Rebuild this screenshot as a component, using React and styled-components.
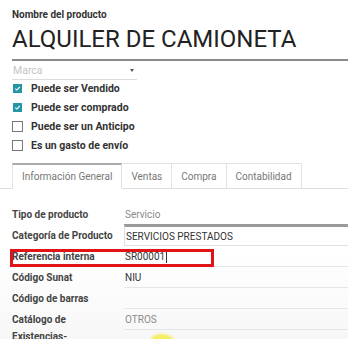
import React from 'react'
import styled, { createGlobalStyle } from 'styled-components';

const GlobalStyle = createGlobalStyle`
    *, *::before, *::after {
        box-sizing: border-box;
    }
    html, body {
        margin: 0;
        padding: 0;
        background: #fff;
        font-family: Roboto, "Liberation Sans", sans-serif;
        overflow: hidden;
    }
`;

const checks = [
    { label: 'Puede ser Vendido', checked: true },
    { label: 'Puede ser comprado', checked: true },
    { label: 'Puede ser un Anticipo', checked: false },
    { label: 'Es un gasto de envío', checked: false },
];

const tabs = ['Información General', 'Ventas', 'Compra', 'Contabilidad'];

const App = () => {
    return (
        <Page>
            <GlobalStyle />
            <FieldCaption>Nombre del producto</FieldCaption>
            <Title>ALQUILER DE CAMIONETA</Title>
            <Brand>
                <span>Marca</span>
                <Caret />
            </Brand>

            <Checks>
                {checks.map((c) => (
                    <CheckRow key={c.label}>
                        <Box $checked={c.checked}>
                            {c.checked && (
                                <svg width="7" height="7" viewBox="0 0 8 8">
                                    <path d="M1.5 4.2 L3.3 5.8 L6.6 2.2" stroke="#fff" strokeWidth="1.3" fill="none" />
                                </svg>
                            )}
                        </Box>
                        <CheckLabel>{c.label}</CheckLabel>
                    </CheckRow>
                ))}
            </Checks>

            <TabBar>
                {tabs.map((t, i) => (
                    <Tab key={t} $active={i === 0}>{t}</Tab>
                ))}
            </TabBar>

            <Fields>
                <Label>Tipo de producto</Label>
                <Value $line="#9a9a9a" $muted>Servicio</Value>

                <Label>Categoría de Producto</Label>
                <BoxedValue>SERVICIOS PRESTADOS</BoxedValue>

                <Highlight>
                    <Label>Referencia interna</Label>
                    <Value $line="#e6e6e6">SR00001<Cursor /></Value>
                </Highlight>

                <Label>Código Sunat</Label>
                <Value $line="#e6e6e6">NIU</Value>

                <Label>Código de barras</Label>
                <Value $line="#e6e6e6"></Value>

                <Label>Catálogo de<br />Existencias-</Label>
                <Value $line="#e6e6e6" $muted>OTROS</Value>
            </Fields>
            <Spot />
        </Page>
    );
}

const Page = styled.div`
    position: relative;
    width: 348px;
    height: 339px;
    overflow: hidden;
    padding: 8px 0 0 12px;
    background: linear-gradient(#fff 0, #fff 250px, #f7f7f7 339px);
`;

const FieldCaption = styled.div`
    font-size: 10px;
    font-weight: 700;
    color: #333;
    line-height: 13px;
`;

const Title = styled.div`
    margin-top: 4px;
    font-size: 24px;
    line-height: 28px;
    color: #222;
    padding-bottom: 6px;
    border-bottom: 2px solid #8a8a8a;
`;

const Brand = styled.div`
    width: 125px;
    height: 18px;
    margin-top: 1px;
    display: flex;
    align-items: center;
    justify-content: space-between;
    border-bottom: 1px solid #dcdcdc;
    font-size: 10.5px;
    color: #c4c4c4;
    padding-left: 1px;
`;

const Caret = styled.span`
    width: 0;
    height: 0;
    margin-right: 3px;
    border-left: 2.5px solid transparent;
    border-right: 2.5px solid transparent;
    border-top: 3px solid #555;
`;

const Checks = styled.div`
    display: flex;
    flex-direction: column;
    gap: 5px;
    margin-top: 1px;
`;

const CheckRow = styled.div`
    display: flex;
    align-items: center;
    height: 14px;
`;

const Box = styled.span`
    width: 11px;
    height: 11px;
    display: flex;
    align-items: center;
    justify-content: center;
    margin-right: 8px;
    background: ${p => (p.$checked ? '#2596a6' : '#fff')};
    border: ${p => (p.$checked ? '1px solid #fff' : '1px solid #777')};
`;

const CheckLabel = styled.span`
    font-size: 10.5px;
    font-weight: 700;
    color: #333;
`;

const TabBar = styled.div`
    display: flex;
    margin: 11px 0 0 -12px;
    padding-left: 12px;
    height: 26px;
    border-bottom: 1px solid #dedede;
`;

const Tab = styled.div`
    display: flex;
    align-items: center;
    padding: 0 9px;
    font-size: 10px;
    color: #777;
    border: 1px solid #e2e2e2;
    border-left: ${p => (p.$active ? '1px solid #e2e2e2' : 'none')};
    border-top: ${p => (p.$active ? '2px solid #aaa' : '1px solid #e2e2e2')};
    border-bottom: ${p => (p.$active ? '1px solid #fff' : 'none')};
    margin-bottom: ${p => (p.$active ? '-1px' : '0')};
    background: #fff;
`;

const Fields = styled.div`
    display: grid;
    grid-template-columns: 112px 1fr;
    grid-auto-rows: 21px;
    margin-top: 16px;
`;

const Label = styled.div`
    font-size: 10px;
    font-weight: 700;
    color: #444;
    line-height: 17px;
    padding-top: 1px;
    white-space: nowrap;
`;

const Value = styled.div`
    font-size: 10px;
    color: ${p => (p.$muted ? '#8a8a8a' : '#333')};
    height: 20px;
    padding-left: 1px;
    border-bottom: 1px solid ${p => p.$line};
    display: flex;
    align-items: center;
`;

const BoxedValue = styled.div`
    font-size: 10px;
    color: #333;
    height: 21px;
    margin-top: -1px;
    padding-left: 1px;
    border: 1px solid #e0e0e0;
    border-top: 2px solid #9a9a9a;
    border-right: none;
    display: flex;
    align-items: center;
`;

const Highlight = styled.div`
    grid-column: 1 / -1;
    display: grid;
    grid-template-columns: 112px 1fr;
    position: relative;

    &::after {
        content: '';
        position: absolute;
        left: -2px;
        top: 2px;
        width: 204px;
        height: 18px;
        border: 3px solid #e01418;
        pointer-events: none;
    }
`;

const Cursor = styled.span`
    display: inline-block;
    width: 1px;
    height: 12px;
    background: #333;
    margin-left: 1px;
`;

const Spot = styled.div`
    position: absolute;
    left: 150px;
    top: 334px;
    width: 24px;
    height: 16px;
    border-radius: 50%;
    background: #f4ee60;
    filter: blur(1px);
`;

export default App
